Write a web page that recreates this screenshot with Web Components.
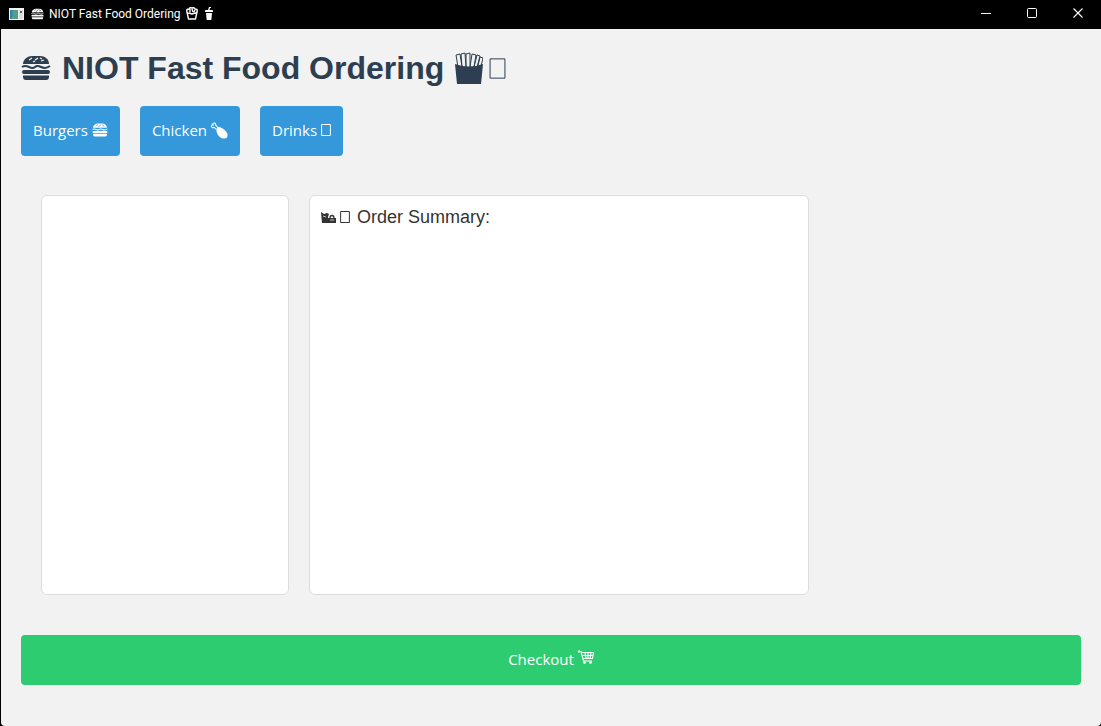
<!DOCTYPE html>
<html lang="en">
<head>
<meta charset="utf-8">
<title>NIOT Fast Food Ordering</title>
<style>
  body { margin: 0; background: #000; }
</style>
</head>
<body>
<app-window>
  <title-bar slot="bar">NIOT Fast Food Ordering</title-bar>
  <app-heading>NIOT Fast Food Ordering</app-heading>
  <category-bar>
    <food-button icon="burger">Burgers</food-button>
    <food-button icon="chicken">Chicken</food-button>
    <food-button icon="missing">Drinks</food-button>
  </category-bar>
  <order-panels>
    <menu-card></menu-card>
    <menu-card wide><summary-title>Order Summary:</summary-title></menu-card>
  </order-panels>
  <food-button icon="cart" block>Checkout</food-button>
</app-window>

<script>
const icons = {
  burger: `<svg viewBox="0 0 30 26" fill="currentColor"><path d="M2 9C2 4 7 1 11 1h8c5 0 9 3 9 8z"/><path d="M1 12c3-2 5-1 7 0s4 2 6 0 4-1 6 0 5 2 9-1" fill="none" stroke="currentColor" stroke-width="2"/><rect x="1" y="15" width="28" height="4" rx="2"/><path d="M2 20.500h26v1.500q0 3-3 3H5q-3 0-3-3z"/><path d="M8 5l3-2M14 5l3-2M12 7l2-1M20 6l3-1M19 3l2 1" stroke="var(--hole)" stroke-width="1.300"/></svg>`,
  fries: `<svg viewBox="0 0 28 32" fill="currentColor"><g fill="var(--hole)" stroke="currentColor" stroke-width="1"><path d="M3 15L1 3l4-1 2 13M7 15L6 2l4-1 1 14M11 15V2l4-1v14M15 15l2-13 4 1-2 12M19 15l3-12 3 1-3 11M23 14l2-9 3 1-2 8"/></g><path d="M0 12q14 5 28 0l-2 20H2z"/></svg>`,
  chicken: `<svg viewBox="0 0 16 16"><path d="M6 4.500L4.500 3Q4.500 .5 2.800 1T2 2.700Q-.2 2.500.5 4.300T3 5l2 2" fill="none" stroke="currentColor"/><path d="M6 4.500c4 0 9 4 9.500 7 .5 3-1 4.500-4 4C8 15 5 11 5 7z" fill="currentColor"/></svg>`,
  cart: `<svg viewBox="0 0 16 14" fill="none" stroke="currentColor" stroke-width="1.100"><path d="M0 1.500h3L5.500 11H14M3.500 2.500h12l-1 6H5M4 5.500h11M7 3l1 5.500M10 3v5.500M13 3l-1 5.500"/><circle cx="6.500" cy="12.500" r=".8" fill="currentColor"/><circle cx="12.500" cy="12.500" r=".8" fill="currentColor"/><path d="M0 1.500h2" stroke-width="2"/></svg>`,
  missing: `<svg viewBox="0 0 8 12" preserveAspectRatio="none"><rect x=".5" y=".5" width="7" height="11" fill="none" stroke="currentColor" vector-effect="non-scaling-stroke"/></svg>`,
  tub: `<svg viewBox="0 0 12 13" fill="none" stroke="currentColor" stroke-width="1.400"><path d="M1 5l1.500 7h7L11 5"/><path d="M1 5Q0 2 3 2q1-2 3-1 2-1 3 1 3 0 2 3-2 2-3 1Q6 8 4 6 2 7 1 5M4 2v3M6 2l1 3M9 3L8 5"/></svg>`,
  cup: `<svg viewBox="0 0 8 13" fill="currentColor"><path d="M0 4q0-1 1-1h2l1-3h2v1H5l-.5 2H7q1 0 1 1v1H0z"/><path d="M1 6h6l-.7 7H1.700z"/></svg>`,
  bags: `<svg viewBox="0 0 15 12"><path d="M0 0l3 2 3-1 2 1-1 3v6H1z" fill="currentColor"/><path d="M7 6h8v5H7z" fill="currentColor"/><path d="M9 6q0-2.500 2-2.500T13 6" fill="none" stroke="currentColor" stroke-width="1.300"/><path d="M9 8h4M2 4l3 1" stroke="var(--hole)" stroke-width=".7"/></svg>`,
  app: `<svg viewBox="0 0 15 12"><path d="M0 0h15v12H0z" fill="#f4f4f4"/><path d="M1 2h8v9H1z" fill="#3a84ad"/><path d="M4 2h5v9H3z" fill="#54a08a"/><path d="M10 2h4v9h-4z" fill="#ddd"/><path d="M11 3h2v2h-2z" fill="#567"/></svg>`,
  min: `<svg viewBox="0 0 11 11"><path d="M0 5.500h10" stroke="currentColor"/></svg>`,
  max: `<svg viewBox="0 0 11 11"><rect x=".5" y=".5" width="9" height="9" rx="1" fill="none" stroke="currentColor"/></svg>`,
  close: `<svg viewBox="0 0 11 11"><path d="M.5 .5l9 9M9.500 .5l-9 9" stroke="currentColor" stroke-width="1.100"/></svg>`
};

const define = (name, render) => customElements.define(name, class extends HTMLElement {
  connectedCallback() {
    if (this.shadowRoot) return;
    const t = document.createElement('template');
    t.innerHTML = `<style>*{box-sizing:border-box} svg{display:block;width:100%;height:100%} .i{display:block;flex:none}</style>` + render(this);
    this.attachShadow({ mode: 'open' }).append(t.content.cloneNode(true));
  }
});

define('app-window', () => `
  <style>
    :host { display: flex; flex-direction: column; min-height: 100vh; background: #000; }
    main { flex: 1; display: flex; flex-direction: column; margin-left: 1px; padding: 20px;
      background: #f2f2f2; border-radius: 0 0 4px 4px; --hole: #f2f2f2; }
  </style>
  <slot name="bar"></slot><main><slot></slot></main>`);

define('title-bar', () => `
  <style>
    :host { display: block; background: #000; color: #fff; font: 12px/16px Roboto, "Open Sans", sans-serif; }
    header { display: flex; align-items: center; height: 29px; padding: 0 0 2px 9px; --hole: #000; }
    .app { width: 15px; height: 12px; margin-right: 7px; }
    .burger { width: 13px; height: 12px; margin-right: 5px; }
    .tub { width: 12px; height: 13px; margin-left: 5px; }
    .cup { width: 8px; height: 13px; margin-left: 7px; }
    nav { display: flex; margin-left: auto; align-self: stretch; }
    button { width: 46px; padding: 0; border: 0; background: none; color: inherit; display: grid; place-items: center; }
    button .i { width: 11px; height: 11px; }
  </style>
  <header>
    <span class="i app">${icons.app}</span><span class="i burger">${icons.burger}</span><slot></slot>
    <span class="i tub">${icons.tub}</span><span class="i cup">${icons.cup}</span>
    <nav>
      <button aria-label="Minimize"><span class="i">${icons.min}</span></button>
      <button aria-label="Maximize"><span class="i">${icons.max}</span></button>
      <button aria-label="Close"><span class="i">${icons.close}</span></button>
    </nav>
  </header>`);

define('app-heading', () => `
  <style>
    :host { display: block; }
    h1 { display: flex; align-items: center; margin: 0; height: 38px; color: #2c3e50;
      font: bold 32px/38px "Liberation Sans", Arial, sans-serif; white-space: nowrap; }
    .burger { width: 30px; height: 26px; margin-right: 11px; }
    .fries { width: 28px; height: 32px; margin-left: 11px; }
    .missing { width: 17px; height: 21px; margin-left: 6px; }
  </style>
  <h1><span class="i burger">${icons.burger}</span><slot></slot><span class="i fries">${icons.fries}</span><span class="i missing">${icons.missing}</span></h1>`);

define('category-bar', () => `
  <style>:host { display: flex; gap: 20px; margin-top: 19px; }</style><slot></slot>`);

define('food-button', el => `
  <style>
    :host { display: block; --hole: #3498db; }
    button { display: flex; align-items: center; justify-content: center; gap: 4px; width: 100%; height: 50px;
      padding: 0 12px 2px; border: 0; border-radius: 4px; background: #3498db; color: #fff;
      font: 15px/20px "Open Sans", "Noto Sans", sans-serif; }
    :host([block]) button { background: #2ecc71; }
    .burger { width: 16px; height: 14px; }
    .chicken { width: 17px; height: 17px; }
    .missing { width: 10px; height: 12px; }
    .cart { width: 16px; height: 14px; margin-bottom: 4px; }
  </style>
  <button type="button"><slot></slot><span class="i ${el.getAttribute('icon')}">${icons[el.getAttribute('icon')]}</span></button>`);

define('order-panels', () => `
  <style>:host { display: flex; gap: 20px; padding: 39px 20px 40px; }</style><slot></slot>`);

define('menu-card', () => `
  <style>
    :host { display: block; box-sizing: border-box; flex: 0 1 248px; min-height: 400px; padding: 11px;
      border: 1px solid #ddd; border-radius: 6px; background: #fff; --hole: #fff; }
    :host([wide]) { flex-basis: 500px; }
  </style><slot></slot>`);

define('summary-title', () => `
  <style>
    :host { display: block; }
    h2 { display: flex; align-items: center; margin: 0; color: #333; font: 18px/20px "Liberation Sans", Arial, sans-serif; }
    .bags { width: 15px; height: 12px; margin: 2px 4px 0 0; }
    .missing { width: 10px; height: 12px; margin-right: 7px; }
  </style>
  <h2><span class="i bags">${icons.bags}</span><span class="i missing">${icons.missing}</span><slot></slot></h2>`);
</script>
</body>
</html>
